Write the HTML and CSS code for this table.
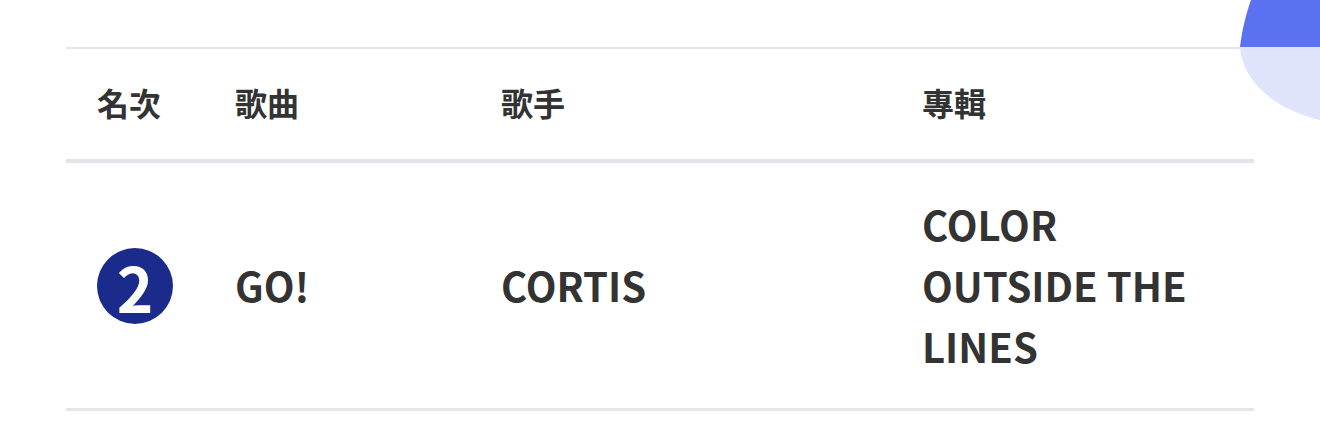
FILE: index.html
```html
<!DOCTYPE html>
<html lang="zh-Hant">
<head>
<meta charset="utf-8">
<link rel="stylesheet" href="styles.css">
</head>
<body>
<div class="page">
  <table class="chart">
    <colgroup>
      <col class="c-rank">
      <col class="c-song">
      <col class="c-artist">
      <col class="c-album">
    </colgroup>
    <thead>
      <tr>
        <th>名次</th>
        <th>歌曲</th>
        <th>歌手</th>
        <th>專輯</th>
      </tr>
    </thead>
    <tbody>
      <tr>
        <td><span class="badge">2</span></td>
        <td>GO!</td>
        <td>CORTIS</td>
        <td>COLOR OUTSIDE THE LINES</td>
      </tr>
    </tbody>
  </table>
  <svg class="blob" width="80" height="125" viewBox="0 0 80 125" aria-hidden="true">
    <path d="M11 0 C6 14 2 30 0 47 L80 47 L80 0 Z" fill="#5a72f1"/>
    <path d="M0 47 C2 78 30 108 80 120 L80 47 Z" fill="#dfe4fc"/>
  </svg>
</div>
</body>
</html>
```
FILE: styles.css
```css
html, body {
  margin: 0;
  padding: 0;
  background: #ffffff;
}
.page {
  position: relative;
  width: 1320px;
  height: 427px;
  overflow: hidden;
  padding-top: 47px;
  box-sizing: border-box;
}
.chart {
  margin-left: 66px;
  width: 1188px;
  border-collapse: collapse;
  table-layout: fixed;
  font-family: "Noto Sans CJK TC", "Noto Sans", sans-serif;
  color: #333333;
  border-top: 2px solid #e6e6e6;
}
.c-rank { width: 138px; }
.c-song { width: 266px; }
.c-artist { width: 421px; }
.c-album { width: 363px; }
.chart th, .chart td {
  text-align: left;
  padding: 0 31px;
  font-weight: 700;
}
.chart th {
  font-size: 32px;
  height: 105px;
  padding-bottom: 5px;
  border-bottom: 4px solid #e1e5ea;
  vertical-align: middle;
}
.chart td {
  font-size: 40px;
  line-height: 61px;
  height: 245px;
  border-bottom: 3px solid #e6e6e6;
  vertical-align: middle;
}
.badge {
  display: flex;
  align-items: center;
  justify-content: center;
  width: 76px;
  height: 76px;
  border-radius: 50%;
  background: #1a2b8c;
  color: #ffffff;
  font-size: 62px;
  line-height: 1;
  font-weight: 700;
}
.blob {
  position: absolute;
  top: 0;
  right: 0;
}
```
